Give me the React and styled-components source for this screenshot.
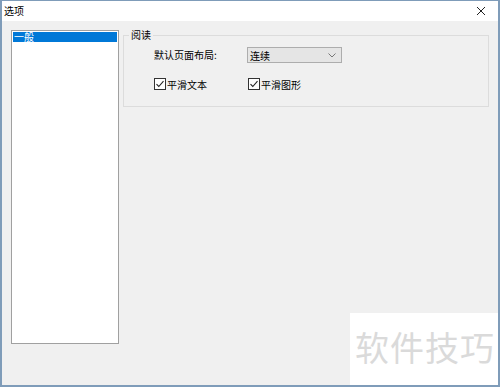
import React from "react";
import styled, { createGlobalStyle } from "styled-components";

const Global = createGlobalStyle`
  html, body { margin: 0; padding: 0; background: #f0f0f0; }
  body { font-family: "Noto Sans CJK SC", "Noto Sans", sans-serif; }
  * { box-sizing: border-box; }
`;

const Window = styled.div`
  position: relative;
  width: 500px;
  height: 387px;
  display: flex;
  flex-direction: column;
  border-left: 2px solid #7f9cb9;
  border-right: 2px solid #7f9cb9;
  border-bottom: 2px solid #7f9cb9;
  border-top: 1px solid #7f9cb9;
  background: #f0f0f0;
  overflow: hidden;
`;

const TitleBar = styled.div`
  height: 20px;
  flex: none;
  background: #ffffff;
  display: flex;
  align-items: center;
  justify-content: space-between;
  padding: 0 0 0 2px;
`;

const Title = styled.span`
  font-size: 10px;
  color: #000;
  line-height: 20px;
`;

const CloseBtn = styled.div`
  width: 30px;
  height: 20px;
  display: flex;
  align-items: center;
  justify-content: center;
  margin-right: 2px;
`;

const Body = styled.div`
  flex: 1;
  display: flex;
  align-items: flex-start;
  padding: 9px 0 0 9px;
  gap: 4px;
`;

const ListBox = styled.div`
  width: 108px;
  height: 314px;
  flex: none;
  background: #fff;
  border: 1px solid #a0a0a0;
  padding: 1px;
`;

const ListItem = styled.div`
  height: 10px;
  background: ${(p) => (p.selected ? "#0078d7" : "transparent")};
  color: ${(p) => (p.selected ? "#fff" : "#000")};
  font-size: 10px;
  line-height: 10px;
  padding-left: 1px;
  white-space: nowrap;
`;

const Group = styled.fieldset`
  margin: -2px 0 0 0;
  min-width: 0;
  width: 366px;
  height: 79px;
  border: 1px solid #dcdcdc;
  padding: 5px 0 0 30px;
  display: flex;
  flex-direction: column;
  gap: 13px;
`;

const Legend = styled.legend`
  font-size: 10px;
  color: #000;
  padding: 0 2px;
  margin-left: -25px;
  line-height: 14px;
`;

const Row = styled.div`
  display: flex;
  align-items: center;
  height: 16px;
`;

const Label = styled.span`
  flex: none;
  width: 93px;
  font-size: 10px;
  color: #000;
  line-height: 16px;
`;

const Select = styled.div`
  flex: none;
  width: 95px;
  height: 16px;
  background: #e5e5e5;
  border: 1px solid #adadad;
  display: flex;
  align-items: center;
  justify-content: space-between;
  padding: 0 5px 0 2px;
  font-size: 10px;
  color: #000;
`;

const Check = styled.label`
  flex: none;
  display: flex;
  align-items: center;
  gap: 1px;
  width: 94px;
  font-size: 10px;
  color: #000;
`;

const Watermark = styled.div`
  position: absolute;
  right: -2px;
  bottom: -2px;
  width: 150px;
  height: 74px;
  background: #ffffff;
  display: flex;
  align-items: center;
  justify-content: center;
  font-size: 34px;
  letter-spacing: 1px;
  color: #dadada;
  padding-bottom: 8px;
`;

const CheckIcon = () => (
  <svg width="12" height="12" viewBox="0 0 12 12">
    <rect x="0.5" y="0.5" width="11" height="11" fill="#fff" stroke="#333" />
    <path d="M2.5 6.2 L4.8 8.5 L9.5 3.2" fill="none" stroke="#222" strokeWidth="1.1" />
  </svg>
);

export default function App() {
  return (
    <>
      <Global />
      <Window>
        <TitleBar>
          <Title>选项</Title>
          <CloseBtn>
            <svg width="10" height="10" viewBox="0 0 10 10">
              <path d="M1 1 L9 9 M9 1 L1 9" stroke="#222" strokeWidth="1" />
            </svg>
          </CloseBtn>
        </TitleBar>
        <Body>
          <ListBox>
            <ListItem selected>一般</ListItem>
          </ListBox>
          <Group>
            <Legend>阅读</Legend>
            <Row>
              <Label>默认页面布局:</Label>
              <Select>
                <span>连续</span>
                <svg width="8" height="5" viewBox="0 0 8 5">
                  <path d="M0.5 0.5 L4 4 L7.5 0.5" fill="none" stroke="#777" strokeWidth="1" />
                </svg>
              </Select>
            </Row>
            <Row>
              <Check>
                <CheckIcon />
                <span>平滑文本</span>
              </Check>
              <Check>
                <CheckIcon />
                <span>平滑图形</span>
              </Check>
            </Row>
          </Group>
        </Body>
        <Watermark>软件技巧</Watermark>
      </Window>
    </>
  );
}
